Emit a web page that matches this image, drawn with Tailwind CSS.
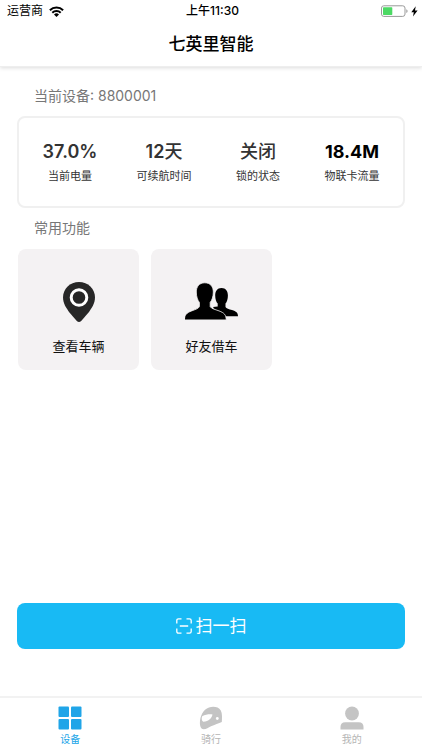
<!DOCTYPE html>
<html lang="zh-CN">
<head>
<meta charset="utf-8">
<meta name="viewport" content="width=device-width, initial-scale=1">
<title>七英里智能</title>
<script src="https://cdn.jsdelivr.net/npm/@tailwindcss/browser@4"></script>
</head>
<body class="flex min-h-screen flex-col bg-white font-['Inter','Noto_Sans_CJK_SC',sans-serif] text-[#333]">
  <header class="border-b border-[#eee] pb-[11px] text-black shadow-[0_1px_4px_rgba(0,0,0,0.14)]">
    <div class="grid h-[22px] grid-cols-3 items-center pr-1 pl-[7px] text-xs leading-4">
      <div class="flex items-center gap-[6px]">
        <span>运营商</span>
        <svg class="h-[11px] w-[15px]" viewBox="0 0 15 11" fill="none" stroke="#000" stroke-width="2" aria-hidden="true">
          <path d="M.9 4.2a9.4 9.4 0 0 1 13.2 0M3.3 6.7a6 6 0 0 1 8.4 0"/>
          <path d="M5 8.5a3.6 3.6 0 0 1 5 0L7.500 11z" fill="#000" stroke="none"/>
        </svg>
      </div>
      <time class="text-center font-medium">上午11:30</time>
      <div class="flex items-center justify-end gap-[3px]">
        <svg class="h-3 w-[27px]" viewBox="0 0 27 12" aria-hidden="true">
          <rect x=".5" y=".8" width="23.500" height="10.600" rx="2.300" fill="#fff" stroke="#999"/>
          <rect x="2" y="2.300" width="9.300" height="7.600" rx=".6" fill="#4cd964"/>
          <path d="M25.300 4.200v3.800q1.300-.5 1.300-1.900t-1.300-1.900z" fill="#999"/>
        </svg>
        <svg class="h-[11px] w-[7px]" viewBox="0 0 7 11" aria-hidden="true"><path d="M4.700.3.300 6.200h2.500L2 10.500l4.600-6H4z"/></svg>
      </div>
    </div>
    <h1 class="mt-[11px] text-center text-[17px] leading-[22px] font-medium">七英里智能</h1>
  </header>

  <main class="flex flex-1 flex-col px-[17px]">
    <p class="mt-[19px] pl-[17px] text-sm leading-5 text-[#777]">当前设备: 8800001</p>
    <dl class="mt-[10px] grid grid-cols-4 rounded-lg border-2 border-[#f0f0f0] px-[4px] py-[22px] text-center">
      <div class="flex flex-col gap-1">
        <dd class="text-lg leading-6 font-semibold">37.0%</dd>
        <dt class="order-last text-[11px] leading-4">当前电量</dt>
      </div>
      <div class="flex flex-col gap-1">
        <dd class="text-lg leading-6 font-semibold">12<span class="font-medium">天</span></dd>
        <dt class="order-last text-[11px] leading-4">可续航时间</dt>
      </div>
      <div class="flex flex-col gap-1">
        <dd class="text-lg leading-6 font-medium">关闭</dd>
        <dt class="order-last text-[11px] leading-4">锁的状态</dt>
      </div>
      <div class="flex flex-col gap-1">
        <dd class="text-lg leading-6 font-bold text-black">18.4M</dd>
        <dt class="order-last text-[11px] leading-4">物联卡流量</dt>
      </div>
    </dl>
    <h2 class="mt-[10px] pl-[17px] text-sm leading-5 text-[#777]">常用功能</h2>
    <div class="mt-[11px] flex gap-3 pl-px">
      <button type="button" class="flex h-[121px] w-[121px] flex-col items-center justify-end gap-[14px] rounded-lg bg-[#f4f2f3] pb-[14px] text-[#111]">
        <svg class="h-10 w-8" viewBox="0 0 32 40" aria-hidden="true">
          <path d="M16 0C7 0 0 6.800 0 15.500c0 5.500 3 10 6 14.500l7.800 9q2.200 2 4.400 0L26 30c3-4.500 6-9 6-14.500C32 6.800 25 0 16 0z" fill="#272727"/>
          <circle cx="16" cy="15.500" r="7.800" fill="#272727" stroke="#fff" stroke-width="3"/>
        </svg>
        <span class="text-[13px] leading-5">查看车辆</span>
      </button>
      <button type="button" class="flex h-[121px] w-[121px] flex-col items-center justify-end gap-[14px] rounded-lg bg-[#f4f2f3] pb-[14px] text-[#111]">
        <svg class="h-10 w-[54px]" viewBox="0 0 54 40" aria-hidden="true">
          <path d="M36.500 6c4.400 0 6.400 3.400 6.400 7.500 0 3.600-1 6.500-2.400 8.100V25c.8 1.700 3.500 2 6.500 3.100 4.200 1.500 6 2.700 6 6.100H34L28 25l4.700-.5v-2.900c-1.500-1.600-2.500-4.500-2.500-8.100 0-4.100 2-7.500 6.300-7.500z"/>
          <path d="M19.800.8c5.700 0 8.500 4 8.500 9.200 0 4.500-1.300 8.300-3.100 10.400v4.200c1.100 2.200 4.700 2.700 8.800 4.300 5.300 2 7.200 4 7.200 9H-.5c0-5 1.900-7 7.200-9 4.100-1.600 6.600-2.100 7.700-4.300v-4.200C12.600 18.300 11.300 14.500 11.300 10c0-5.200 2.800-9.200 8.500-9.200z" stroke="#f4f2f3" stroke-width=".8"/>
        </svg>
        <span class="text-[13px] leading-5">好友借车</span>
      </button>
    </div>
    <button type="button" class="mt-auto mb-[47px] flex h-[46px] items-center justify-center gap-1 rounded-lg bg-[#18baf4] text-[17px] leading-6 font-normal text-white">
      <svg class="size-4" viewBox="0 0 16 16" fill="none" stroke="#fff" stroke-width="1.300" aria-hidden="true">
        <path d="M.8 5.500V2.500Q.8.800 2.500.8H5.500M10.500.8h3q1.700 0 1.700 1.700v3M15.200 10.500v3q0 1.700-1.700 1.700h-3M5.500 15.200h-3Q.8 15.200.8 13.500v-3M3.800 8h8.400"/>
      </svg>
      <span>扫一扫</span>
    </button>
  </main>

  <nav class="grid h-[54px] grid-cols-3 border-t-2 border-[#f2f2f2] text-[10px] leading-4 text-[#b5b5b5]">
    <a href="#device" aria-current="page" class="flex flex-col items-center gap-px pt-2 text-[#20a5e8]">
      <svg class="size-6" viewBox="0 0 24 24" fill="currentColor" aria-hidden="true">
        <rect x=".5" y=".5" width="10.500" height="10.500" rx="1"/><rect x="13" y=".5" width="10.500" height="10.500" rx="1"/>
        <rect x=".5" y="13" width="10.500" height="10.500" rx="1"/><rect x="13" y="13" width="10.500" height="10.500" rx="1"/>
      </svg>
      <span>设备</span>
    </a>
    <a href="#ride" class="flex flex-col items-center gap-px pt-2">
      <svg class="size-6" viewBox="0 0 24 24" aria-hidden="true">
        <path d="M10 1.500C14 .2 19.500.6 21.800 4.500c1.600 3 1.300 8 1 11.500-2.800 1.600-7.400 2.600-10.800 4.300-2.600 1.300-4.700 2.900-7.300 2.900C1.900 23.200.9 20.200.9 17 1 10.500 4 3.500 10 1.500z" fill="#c4c4c4"/>
        <path d="M3.200 10.300c3.300-1.800 6.800-2.300 10.300-1.900-.6 3.400-3.500 6.700-9.300 7.400-1.600-1-1.900-3.800-1-5.500z" fill="#fff"/>
        <circle cx="18.300" cy="12.500" r="1.400" fill="#fff"/>
      </svg>
      <span>骑行</span>
    </a>
    <a href="#mine" class="flex flex-col items-center gap-px pt-2">
      <svg class="size-6" viewBox="0 0 24 24" fill="#c4c4c4" aria-hidden="true">
        <circle cx="12" cy="7.500" r="6.900"/><path d="M.5 23.500V21q0-4.800 4.800-4.800h13.400q4.800 0 4.800 4.800v2.500z"/>
      </svg>
      <span>我的</span>
    </a>
  </nav>
</body>
</html>
